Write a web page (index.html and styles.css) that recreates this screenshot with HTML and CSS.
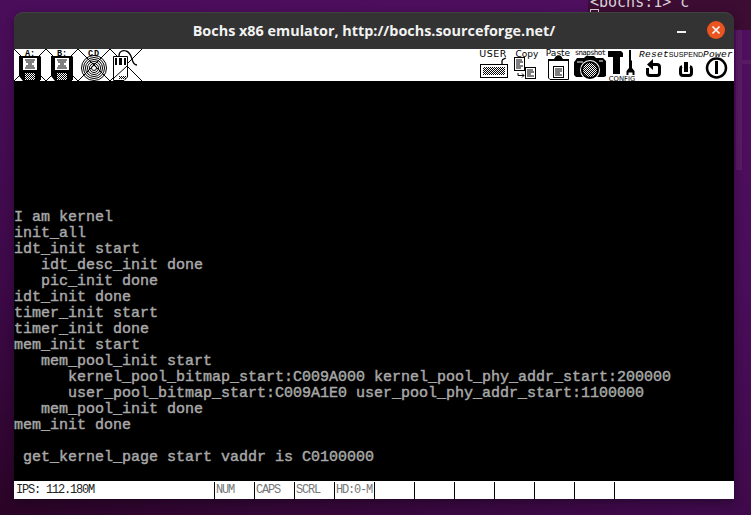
FILE: index.html
```html
<!DOCTYPE html>
<html lang="en">
<head>
<meta charset="utf-8">
<title>Bochs x86 emulator</title>
<link rel="stylesheet" href="styles.css">
</head>
<body>
<svg class="defs" aria-hidden="true"><defs>
<pattern id="dither" width="2" height="2" patternUnits="userSpaceOnUse"><rect width="2" height="2" fill="#fff"/><rect width="1" height="1" fill="#000"/><rect x="1" y="1" width="1" height="1" fill="#000"/></pattern>
</defs></svg>
<div class="desktop">
  <div class="wall-shape"></div>
  <div class="bg-term">&lt;bochs:1&gt; c<span class="bg-cursor"></span></div>
  <main class="window">
    <header class="titlebar">
      <h1 class="title">Bochs x86 emulator, http://bochs.sourceforge.net/</h1>
      <div class="controls">
        <span class="minimize"></span>
        <span class="close"><svg viewBox="0 0 18 18" class="close-x"><path d="M5.500 5.500l7 7M12.500 5.500l-7 7"/></svg></span>
      </div>
    </header>
    <nav class="toolbar">
      <svg class="tool" viewBox="0 0 32 32">
        <path class="thin" d="M0 0L32 32M32 0L0 32"/>
        <path d="M5 7H26L27 8V32H9L5 27Z"/>
        <rect x="9" y="9" width="14" height="12" fill="#fff"/>
        <path class="thin" d="M11 11H21M12 13H20M14 15H18M12 17H20M11 19H21"/>
        <rect x="11" y="24" width="10" height="7" fill="url(#dither)"/>
        <path class="wline" d="M0 26L6 32M32 26L26 32"/>
        <text class="lbl-mono" x="16" y="6.500">A:</text>
      </svg>
      <svg class="tool" viewBox="0 0 32 32">
        <path class="thin" d="M0 0L32 32M32 0L0 32"/>
        <path d="M5 7H26L27 8V32H9L5 27Z"/>
        <rect x="9" y="9" width="14" height="12" fill="#fff"/>
        <path class="thin" d="M11 11H21M12 13H20M14 15H18M12 17H20M11 19H21"/>
        <rect x="11" y="24" width="10" height="7" fill="url(#dither)"/>
        <path class="wline" d="M0 26L6 32M32 26L26 32"/>
        <text class="lbl-mono" x="16" y="6.500">B:</text>
      </svg>
      <svg class="tool" viewBox="0 0 32 32">
        <path class="thin" d="M0 0L32 32M32 0L0 32"/>
        <circle class="ring" cx="16" cy="19" r="12.500" fill="#fff"/>
        <circle class="ring" cx="16" cy="19" r="10.500"/>
        <circle class="ring" cx="16" cy="19" r="8.500"/>
        <circle class="ring" cx="16" cy="19" r="6.500"/>
        <circle class="ring" cx="16" cy="19" r="4.500"/>
        <circle class="ring" cx="16" cy="19" r="2.500"/>
        <text class="lbl-mono lbl-wide" x="16" y="6.500">CD</text>
      </svg>
      <svg class="tool" viewBox="0 0 32 32">
        <path class="thin" d="M0 0L32 32M32 0L0 32"/>
        <path class="box" d="M3.500 7.500H17.500V28L14 31.500H3.500Z"/>
        <path d="M5 9H7V16H5ZM9 9H12V16H9ZM14 9H16V16H14Z"/>
        <path class="thin" d="M4 29L17 17"/>
        <rect x="9" y="27" width="7" height="3" fill="url(#dither)"/>
        <path class="curve" d="M9 7C9 2 13 1 16 2C20 3 21 7 22 10C23 14 25 16 27 16"/>
      </svg>
      <div class="tool-gap"></div>
      <svg class="tool" viewBox="0 0 32 32">
        <rect class="box" x="2.500" y="15.500" width="27" height="13" />
        <rect x="5" y="18" width="22" height="8" fill="url(#dither)"/>
        <path class="curve" d="M24 15V12C24 10 26 10 28 9"/>
        <text class="lbl-user" x="15" y="8">USER</text>
      </svg>
      <svg class="tool" viewBox="0 0 32 32">
        <rect class="box" x="4.500" y="8.500" width="10" height="13"/>
        <path class="thin" d="M6 11H12M6 13H13M6 15H10M6 17H13M6 19H11"/>
        <rect class="box" x="15.500" y="18.500" width="10" height="11"/>
        <path class="thin" d="M17 21H23M17 23H24M17 25H21M17 27H24"/>
        <path class="thin" d="M8 24V26.500H14M12 24.500L14 26.500L12 28.500"/>
        <text class="lbl-copy" x="17" y="8">Copy</text>
      </svg>
      <svg class="tool" viewBox="0 0 32 32">
        <path class="box" d="M6.500 10.500H26.500V30.500H8L6.500 29Z"/>
        <path d="M6 10H12L14 7H19L21 10H27V12H6Z"/>
        <rect class="box" x="11.500" y="17.500" width="10" height="11"/>
        <path class="thin" d="M13 20H20M13 22H20M13 24H18M13 26H20"/>
        <text class="lbl-copy" x="16" y="7">Paste</text>
      </svg>
      <svg class="tool" viewBox="0 0 32 32">
        <path d="M1 12L3 9H10L12 7H20L22 9H29L32 12V27L30 28H2L0 26V13Z"/>
        <path class="wline" d="M3 13H9M25 12H29"/>
        <circle cx="16" cy="21" r="10" fill="#fff"/>
        <circle cx="16" cy="21" r="9" fill="#000"/>
        <circle cx="16" cy="21" r="7" fill="url(#dither)"/>
        <text class="lbl-snap" x="16" y="6">snapshot</text>
      </svg>
      <svg class="tool" viewBox="0 0 32 32">
        <path d="M2 2H15L17 4V8H14V25H7V8H2Z"/>
        <path d="M23 1H25V11L26 12V19L28.500 22V26H26.500V23.500H22.500V26H20.500V22L23 19Z"/>
        <text class="lbl-config" x="16" y="31.500">CONFIG</text>
      </svg>
      <svg class="tool" viewBox="0 0 32 32">
        <path class="thick" d="M9.500 19V24Q9.500 26.500 12 26.500H19Q21.500 26.500 21.500 24V18Q21.500 15.500 19 15.500H15"/>
        <path d="M15 10V21L9 15.500Z"/>
        <text class="lbl-ital" x="16" y="8">Reset</text>
      </svg>
      <svg class="tool" viewBox="0 0 32 32">
        <path class="thick" d="M12 17.500Q10.500 18 10.500 20V24Q10.500 26.500 13 26.500H19Q21.500 26.500 21.500 24V20Q21.500 18 20 17.500"/>
        <rect x="14" y="13" width="4" height="10"/>
        <text class="lbl-susp" x="16" y="8">SUSPEND</text>
      </svg>
      <svg class="tool" viewBox="0 0 32 32">
        <circle class="pcircle" cx="14.500" cy="19" r="9.500"/>
        <rect x="13" y="12" width="3" height="13"/>
        <text class="lbl-ital" x="16" y="8">Power</text>
      </svg>
    </nav>
    <section class="screen">
      <div class="line">I am kernel</div>
      <div class="line">init_all</div>
      <div class="line">idt_init start</div>
      <div class="line">   idt_desc_init done</div>
      <div class="line">   pic_init done</div>
      <div class="line">idt_init done</div>
      <div class="line">timer_init start</div>
      <div class="line">timer_init done</div>
      <div class="line">mem_init start</div>
      <div class="line">   mem_pool_init start</div>
      <div class="line">      kernel_pool_bitmap_start:C009A000 kernel_pool_phy_addr_start:200000</div>
      <div class="line">      user_pool_bitmap_start:C009A1E0 user_pool_phy_addr_start:1100000</div>
      <div class="line">   mem_pool_init done</div>
      <div class="line">mem_init done</div>
      <div class="line"> </div>
      <div class="line"> get_kernel_page start vaddr is C0100000</div>
      <div class="line"> </div>
      <div class="line cursor-row"><span class="cursor"></span></div>
    </section>
    <footer class="status">
      <div class="cell cell-ips">IPS: 112.180M</div>
      <div class="cell cell-key">NUM</div>
      <div class="cell cell-key">CAPS</div>
      <div class="cell cell-key">SCRL</div>
      <div class="cell cell-key">HD:0-M</div>
      <div class="cell cell-key"></div>
      <div class="cell cell-key"></div>
      <div class="cell cell-key"></div>
      <div class="cell cell-key"></div>
      <div class="cell cell-key"></div>
      <div class="cell cell-key"></div>
      <div class="cell cell-rest"></div>
    </footer>
  </main>
</div>
</body>
</html>
```
FILE: styles.css
```css
* { box-sizing: border-box; }
html, body { margin: 0; height: 100%; }
body { overflow: hidden; background: #2d0629; }
.defs { position: absolute; width: 0; height: 0; }

.desktop {
  position: relative;
  width: 751px;
  height: 515px;
  padding: 12px 0 0 14px;
  overflow: hidden;
  background:
    linear-gradient(#5a1a62, #5a1a62) 736px 30px / 6px 140px no-repeat,
    linear-gradient(#5a1a62, #5a1a62) 736px 60px / 15px 4px no-repeat,
    linear-gradient(200deg, #4f0f60 0%, #4a0d5a 35%, #3d0948 70%, #2a0426 100%);
}
.wall-shape {
  position: absolute;
  left: 588px;
  right: 0;
  top: 0;
  height: 30px;
  background: #3c0c32;
}
.bg-term {
  position: absolute;
  left: 590px;
  top: -7px;
  font: 15px/18px "DejaVu Sans Mono", monospace;
  color: #d8d0d8;
}
.bg-cursor {
  position: absolute;
  left: 0;
  top: 16px;
  width: 9px;
  height: 9px;
  border: 1px solid #d8d0d8;
}

.window {
  position: relative;
  width: 720px;
  display: flex;
  flex-direction: column;
  box-shadow: 0 3px 10px rgba(0, 0, 0, .35);
  border-radius: 9px 9px 0 0;
}
.titlebar {
  height: 37px;
  display: flex;
  align-items: center;
  justify-content: center;
  position: relative;
  background: #333333;
  border-radius: 9px 9px 0 0;
  box-shadow: inset 0 1px 0 #414141;
}
.title {
  margin: 0;
  font: 700 14.400px/20px "Open Sans", sans-serif;
  color: #f2f2f2;
  white-space: nowrap;
}
.controls {
  position: absolute;
  right: 9px;
  top: 9px;
  display: flex;
  align-items: center;
  gap: 21px;
}
.minimize { width: 9px; height: 2px; margin-top: 4px; background: #f2f2f2; }
.close { width: 18px; height: 18px; border-radius: 50%; background: #e95420; display: block; }
.close-x { display: block; width: 18px; height: 18px; }
.close-x path { stroke: #fff; stroke-width: 1.600; fill: none; }

.toolbar { height: 32px; display: flex; background: #fff; }
.tool { width: 32px; height: 32px; display: block; flex: none; overflow: visible; }
.tool-gap { flex: 1; }
.thin { fill: none; stroke: #000; stroke-width: 1; }
.wline { fill: none; stroke: #fff; stroke-width: 1; }
.box { fill: #fff; stroke: #000; stroke-width: 1; }
.ring { fill: none; stroke: #000; stroke-width: 1; }
.curve { fill: none; stroke: #000; stroke-width: 1.300; }
.thick { fill: none; stroke: #000; stroke-width: 3; }
.pcircle { fill: none; stroke: #000; stroke-width: 2.500; }
.tool text { text-anchor: middle; fill: #000; }
.lbl-mono { font: 700 8.500px "Liberation Mono", monospace; }
.lbl-wide { letter-spacing: 1px; }
.lbl-user { font: 9.500px "DejaVu Sans", sans-serif; letter-spacing: .5px; }
.lbl-copy { font: 9px "DejaVu Sans", sans-serif; }
.lbl-snap { font: 7.500px "DejaVu Sans Mono", monospace; letter-spacing: -.7px; }
.lbl-config { font: 6.800px "DejaVu Sans", sans-serif; }
.lbl-ital { font: italic 9.500px "Liberation Mono", monospace; letter-spacing: .3px; }
.lbl-susp { font: 7px "Liberation Sans", sans-serif; letter-spacing: .1px; }

.screen {
  height: 400px;
  padding: 129px 0 0 0;
  background: #000;
  color: #a8a8a8;
  font: 15px/16px "Liberation Mono", monospace;
  -webkit-text-stroke: .45px #a8a8a8;
  overflow: hidden;
}
.line { height: 16px; white-space: pre; }
.cursor-row { position: relative; }
.cursor { position: absolute; left: 1px; bottom: 1px; width: 8px; height: 2px; background: #a8a8a8; }

.status {
  height: 18px;
  display: flex;
  background: #fff;
  padding-top: 1px;
  font: 12px/17px "Liberation Mono", monospace;
  letter-spacing: -1.200px;
}
.cell { flex: none; width: 40px; padding-left: 1px; border-left: 1px solid #000; color: #777; white-space: nowrap; overflow: hidden; }
.cell-ips { width: 200px; border-left: 0; color: #222; padding-left: 2px; }
.cell-rest { width: 120px; }
```
